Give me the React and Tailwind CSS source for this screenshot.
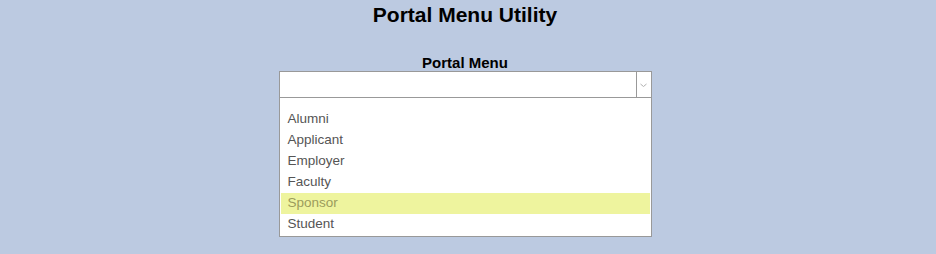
import React from 'react';

const options = ['Alumni', 'Applicant', 'Employer', 'Faculty', 'Sponsor', 'Student'];

const App = () => {
  const selected = 'Sponsor';

  return (
    <div className="w-[936px] h-[254px] bg-[#bccae1] font-['Liberation_Sans',Arial,sans-serif] text-black">
      <div className="flex flex-col items-center pr-[6px]">
        <h1 className="text-[21px] leading-[24px] font-bold mt-[3px]">Portal Menu Utility</h1>
        <label className="text-[15px] leading-[17px] font-bold mt-[27px]">Portal Menu</label>

        <div className="w-[373px]">
          {/* select box */}
          <div className="flex h-[27px] bg-white border border-[#999]">
            <div className="flex-1" />
            <div className="w-[15px] border-l border-[#999] flex items-center justify-center">
              <svg width="7" height="5" viewBox="0 0 7 5" className="mt-[2px]">
                <path d="M0.5 1 L3.5 3.5 L6.5 1" fill="none" stroke="#b0b0b0" strokeWidth="1" />
              </svg>
            </div>
          </div>

          {/* dropdown list */}
          <div className="bg-white border border-t-0 border-[#999] pt-[11px] pb-[1px] px-[1px]">
            {options.map((opt) => (
              <div
                key={opt}
                className={`h-[21px] leading-[20px] text-[13.5px] pl-[7px] ${
                  opt === selected ? 'bg-[#eef49e] text-[#9c9c5c]' : 'text-[#555]'
                }`}
              >
                {opt}
              </div>
            ))}
          </div>
        </div>
      </div>
    </div>
  );
};

export default App;
